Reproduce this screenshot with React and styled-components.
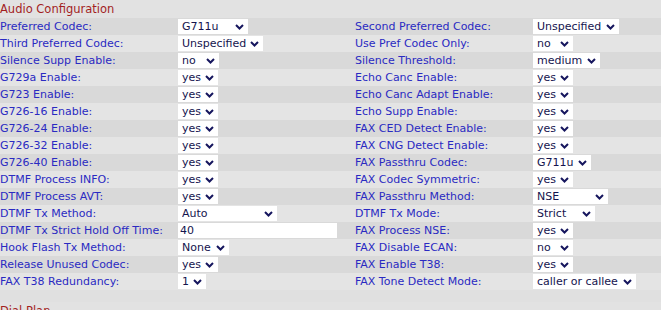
import React from "react";
import styled, { createGlobalStyle } from "styled-components";

const Global = createGlobalStyle`
  html, body { margin: 0; padding: 0; background: #e0e0e0; }
  body { font-family: "DejaVu Sans", Verdana, sans-serif; font-size: 11px; }
`;

const Page = styled.div`
  width: 661px;
  background: #e0e0e0;
`;

const Section = styled.section`
  display: flex;
  flex-direction: column;
  padding-bottom: 12px;
`;

const Header = styled.div`
  height: 18px;
  display: flex;
  align-items: center;
  color: #a31f1f;
  font-size: 11.5px;
  background: #e2e2e2;
`;

const Row = styled.div`
  display: grid;
  grid-template-columns: 178px 177px 178px 1fr;
  height: 17px;
  align-items: center;
  background: ${(p) => (p.$dark ? "#d9d9d9" : "#e4e4e4")};
`;

const Label = styled.div`
  color: #2a2ac2;
  white-space: nowrap;
  line-height: 17px;
`;

const Cell = styled.div`
  display: flex;
  align-items: center;
  height: 17px;
`;

const SelectWrap = styled.div`
  position: relative;
  width: ${(p) => p.$w}px;
  height: 15px;
`;

const Select = styled.select`
  appearance: none;
  -webkit-appearance: none;
  width: 100%;
  height: 15px;
  margin: 0;
  border: none;
  border-radius: 0;
  background: #fff;
  color: #14144e;
  font-family: "DejaVu Sans", Verdana, sans-serif;
  font-size: 11px;
  padding: 0 0 0 4px;
  outline: none;
`;

const Chevron = styled.svg`
  position: absolute;
  right: 4px;
  top: 5px;
  pointer-events: none;
`;

const TextInput = styled.input`
  width: ${(p) => p.$w}px;
  height: 15px;
  box-sizing: border-box;
  border: none;
  margin: 0;
  background: #fff;
  color: #14144e;
  font-family: "DejaVu Sans", Verdana, sans-serif;
  font-size: 11px;
  padding: 0 0 0 2px;
  outline: none;
`;

function Drop({ value, w }) {
  return (
    <SelectWrap $w={w}>
      <Select defaultValue={value}>
        <option value={value}>{value}</option>
      </Select>
      <Chevron width="9" height="6" viewBox="0 0 9 6">
        <path d="M1 1 L4.5 4.5 L8 1" fill="none" stroke="#16165e" strokeWidth="2" />
      </Chevron>
    </SelectWrap>
  );
}

function Control({ c }) {
  if (c.input) return <TextInput $w={c.w} defaultValue={c.v} />;
  return <Drop value={c.v} w={c.w} />;
}

const left = [
  ["Preferred Codec:", "G711u", 70],
  ["Third Preferred Codec:", "Unspecified", 85],
  ["Silence Supp Enable:", "no", 41],
  ["G729a Enable:", "yes", 40],
  ["G723 Enable:", "yes", 40],
  ["G726-16 Enable:", "yes", 40],
  ["G726-24 Enable:", "yes", 40],
  ["G726-32 Enable:", "yes", 40],
  ["G726-40 Enable:", "yes", 40],
  ["DTMF Process INFO:", "yes", 40],
  ["DTMF Process AVT:", "yes", 40],
  ["DTMF Tx Method:", "Auto", 99],
  ["DTMF Tx Strict Hold Off Time:", "40", 159, true],
  ["Hook Flash Tx Method:", "None", 51],
  ["Release Unused Codec:", "yes", 40],
  ["FAX T38 Redundancy:", "1", 28],
];

const right = [
  ["Second Preferred Codec:", "Unspecified", 86],
  ["Use Pref Codec Only:", "no", 40],
  ["Silence Threshold:", "medium", 67],
  ["Echo Canc Enable:", "yes", 40],
  ["Echo Canc Adapt Enable:", "yes", 40],
  ["Echo Supp Enable:", "yes", 40],
  ["FAX CED Detect Enable:", "yes", 40],
  ["FAX CNG Detect Enable:", "yes", 40],
  ["FAX Passthru Codec:", "G711u", 58],
  ["FAX Codec Symmetric:", "yes", 40],
  ["FAX Passthru Method:", "NSE", 75],
  ["DTMF Tx Mode:", "Strict", 62],
  ["FAX Process NSE:", "yes", 40],
  ["FAX Disable ECAN:", "no", 40],
  ["FAX Enable T38:", "yes", 40],
  ["FAX Tone Detect Mode:", "caller or callee", 103],
];

const toC = (r) => ({ label: r[0], v: r[1], w: r[2], input: !!r[3] });

export default function App() {
  return (
    <Page>
      <Global />
      <Section>
        <Header>Audio Configuration</Header>
        {left.map((l, i) => {
          const a = toC(l);
          const b = toC(right[i]);
          return (
            <Row key={a.label} $dark={i % 2 === 0}>
              <Label>{a.label}</Label>
              <Cell><Control c={a} /></Cell>
              <Label>{b.label}</Label>
              <Cell><Control c={b} /></Cell>
            </Row>
          );
        })}
      </Section>
      <Section>
        <Header>Dial Plan</Header>
      </Section>
    </Page>
  );
}
